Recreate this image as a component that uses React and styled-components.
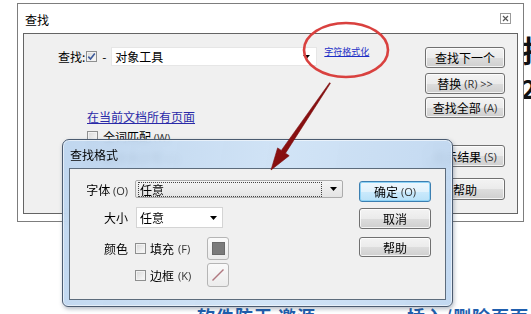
import React from 'react';
import styled, { createGlobalStyle } from 'styled-components';

const Global = createGlobalStyle`
  html, body { margin: 0; padding: 0; background: #fff; }
  body {
    width: 531px; height: 314px; overflow: hidden;
    font-family: "Noto Sans CJK SC", "Noto Sans", sans-serif;
    font-size: 12px; color: #000;
  }
`;

const Stage = styled.div`
  position: relative;
  width: 531px; height: 314px; overflow: hidden;
  box-sizing: border-box;
  padding: 3px 0 0 17px;
`;

const BgText = styled.div`
  position: absolute; z-index: 0;
  font-weight: 700; white-space: nowrap; line-height: 1;
  font-size: ${p => p.$size}px;
  color: ${p => p.$color};
  letter-spacing: ${p => p.$ls || 0}px;
`;

const Window = styled.div`
  position: relative; z-index: 1;
  width: 507px; height: 219px; box-sizing: border-box;
  border: 1px solid #7d7d7d; background: #fff;
  display: flex; flex-direction: column;
`;

const TitleBar = styled.div`
  height: 29px; flex: none; box-sizing: border-box;
  display: flex; align-items: center; justify-content: space-between;
  padding: 2px 12px 0 7px;
  font-size: 12px;
`;

const CloseBox = styled.div`
  width: 11px; height: 11px; box-sizing: border-box;
  border: 1px solid #9a9a9a; background: #fff;
  display: flex; align-items: center; justify-content: center;
  margin-top: -2px;
`;

const Panel = styled.div`
  flex: 1; margin: 0 5px 7px 5px; box-sizing: border-box;
  border: 1px solid #646464; background: #f0f0f0;
  display: flex; padding: 13px 12px 0 34px;
`;

const LeftCol = styled.div`
  flex: 1; display: flex; flex-direction: column;
`;

const SearchRow = styled.div`
  display: flex; align-items: center; height: 19px;
`;

const Dash = styled.span`
  width: 14px; text-align: center;
`;

const Combo = styled.div`
  box-sizing: border-box; flex: none;
  width: ${p => p.$w}px; height: ${p => p.$h}px;
  display: flex; align-items: center; justify-content: space-between;
  padding: ${p => p.$pad || '0 6px 0 3px'};
  background: ${p => p.$bg || '#fff'};
  border: 1px solid ${p => p.$bc || '#e6e6e6'};
  border-radius: ${p => p.$r || 0}px;
`;

const Focus = styled.span`
  flex: 1; margin-right: 8px; height: 13px; line-height: 13px;
  border: 1px dotted #444; padding-left: 1px;
`;

const SmallLink = styled.span`
  align-self: flex-start; margin: 0 0 0 7px;
  font-size: 9px; line-height: 9px; color: #1d2fc6; text-decoration: underline;
`;

const PageLink = styled.span`
  margin: 44px 0 0 29px; align-self: flex-start;
  font-size: 12px; line-height: 13px; color: #2a2aa8; text-decoration: underline;
`;

const CheckRow = styled.div`
  display: flex; align-items: center; gap: 5px;
  margin: ${p => p.$mt}px 0 0 29px; height: 13px;
`;

const Check = styled.span`
  display: inline-flex; flex: none;
  width: 11px; height: 11px; box-sizing: border-box;
  border: 1px solid #8e8f8f;
  background: linear-gradient(135deg, #d8d8d8, #fbfbfb);
  box-shadow: inset 0 0 0 1px #f2f2f2;
  align-items: center; justify-content: center;
`;

const Paren = styled.span`
  font-family: "Segoe UI", "Open Sans", "Noto Sans", sans-serif;
  font-size: 11px; color: #333;
`;

const BtnCol = styled.div`
  width: ${p => p.$w}px; flex: none;
  display: flex; flex-direction: column;
  padding-top: ${p => p.$pt || 0}px;
`;

const Btn = styled.div`
  box-sizing: border-box; width: 100%;
  height: ${p => p.$h || 21}px; margin-top: ${p => p.$mt || 0}px;
  display: flex; align-items: center; justify-content: center;
  border: 1px solid ${p => (p.$primary ? '#3c7fb1' : '#707070')};
  border-radius: 3px;
  background: ${p => (p.$primary
    ? 'linear-gradient(#eef7fd 0%, #e1f2fc 50%, #cbeafc 51%, #b9e1f8 100%)'
    : 'linear-gradient(#f3f3f3 0%, #ebebeb 50%, #dddddd 51%, #cfcfcf 100%)')};
  box-shadow: ${p => (p.$primary
    ? 'inset 0 0 0 1px #8ed3f6'
    : 'inset 0 0 0 1px rgba(255,255,255,0.75)')};
  font-size: 12px; white-space: nowrap; gap: 3px;
`;

const FormatDialog = styled.div`
  position: absolute; left: 62px; top: 139px; z-index: 2;
  width: 391px; height: 168px; box-sizing: border-box;
  border: 1px solid #4b5b70; border-radius: 7px 7px 6px 6px;
  background: linear-gradient(100deg, rgba(186,211,238,0.9) 0%, rgba(206,226,246,0.92) 55%, rgba(190,214,240,0.93) 100%);
  backdrop-filter: blur(3px);
  box-shadow: inset 0 0 0 1px rgba(255,255,255,0.55), 1px 2px 4px rgba(40,60,90,0.35);
  display: flex; flex-direction: column;
`;

const DlgTitle = styled.div`
  height: 28px; flex: none; display: flex; align-items: center;
  padding: 0 0 0 7px; font-size: 12px; color: #000;
`;

const DlgBody = styled.div`
  flex: 1; margin: 0 6px 6px 6px; box-sizing: border-box;
  border: 1px solid #5d6c7c; background: #f0f0f0;
  display: flex; justify-content: space-between;
  padding: 11px 14px 0 0;
`;

const Form = styled.div`
  display: flex; flex-direction: column;
`;

const FormRow = styled.div`
  display: flex; align-items: center; gap: 7px;
  height: ${p => p.$h}px; margin-top: ${p => p.$mt || 0}px;
`;

const Label = styled.span`
  width: 58px; flex: none; text-align: right; white-space: nowrap;
`;

const Opt = styled.span`
  width: 65px; flex: none; display: flex; align-items: center; gap: 4px;
  white-space: nowrap;
`;

const Swatch = styled.div`
  width: 22px; height: ${p => p.$h}px; box-sizing: border-box;
  border: 1px solid #b5b5b5; border-radius: 3px;
  background: linear-gradient(#fafafa, #ececec);
  display: flex; align-items: center; justify-content: center;
`;

const Fill = styled.span`
  width: 13px; height: 13px; background: #7b7b7b; border: 1px solid #6a6a6a;
  box-sizing: border-box;
`;

const Overlay = styled.svg`
  position: absolute; left: 0; top: 0; z-index: 3;
  pointer-events: none;
`;

const DropArrow = () => (
  <svg width="7" height="4" viewBox="0 0 7 4"><polygon points="0,0 7,0 3.5,4" fill="#000" /></svg>
);

const Tick = () => (
  <svg width="9" height="9" viewBox="0 0 9 9">
    <path d="M1.3 4.6 L3.5 7 L7.8 1.5" fill="none" stroke="#3d5a9a" strokeWidth="1.6" />
  </svg>
);

export default function App() {
  return (
    <>
      <Global />
      <Stage>
        <BgText $size={30} $color="#111" style={{ left: 522, top: 34 }}>批</BgText>
        <BgText $size={26} $color="#111" style={{ left: 521, top: 75 }}>2</BgText>
        <BgText $size={18} $color="#1f5fae" $ls={1} style={{ left: 197, top: 307 }}>软件防王 邀源</BgText>
        <BgText $size={18} $color="#1f5fae" $ls={1} style={{ left: 407, top: 307 }}>插入/删除页面</BgText>

        <Window>
          <TitleBar>
            <span>查找</span>
            <CloseBox>
              <svg width="7" height="7" viewBox="0 0 7 7">
                <path d="M1 1 L6 6 M6 1 L1 6" stroke="#555" strokeWidth="1.2" />
              </svg>
            </CloseBox>
          </TitleBar>
          <Panel>
            <LeftCol>
              <SearchRow>
                <span>查找:</span>
                <Check style={{ marginLeft: 1 }}><Tick /></Check>
                <Dash>-</Dash>
                <Combo $w={206} $h={19}>
                  <span>对象工具</span>
                  <DropArrow />
                </Combo>
                <SmallLink>字符格式化</SmallLink>
              </SearchRow>
              <PageLink>在当前文档所有页面</PageLink>
              <CheckRow $mt={7}>
                <Check />
                <span>全词匹配 <Paren>(W)</Paren></span>
              </CheckRow>
              <CheckRow $mt={8}>
                <Check />
                <span>区分大小写 <Paren>(C)</Paren></span>
              </CheckRow>
            </LeftCol>
            <BtnCol $w={80}>
              <Btn>查找下一个</Btn>
              <Btn $mt={5}>替换<Paren>(R) &gt;&gt;</Paren></Btn>
              <Btn $mt={3}>查找全部 <Paren>(A)</Paren></Btn>
              <Btn $mt={27} $h={22}>显示结果 <Paren>(S)</Paren></Btn>
              <Btn $mt={11} $h={22}>帮助</Btn>
            </BtnCol>
          </Panel>
        </Window>

        <FormatDialog>
          <DlgTitle>查找格式</DlgTitle>
          <DlgBody>
            <Form>
              <FormRow $h={18}>
                <Label>字体 <Paren>(O)</Paren></Label>
                <Combo $w={208} $h={18} $bg="linear-gradient(#f4f4f4, #e4e4e4)" $bc="#acacac" $r={2} $pad="0 5px 0 2px">
                  <Focus>任意</Focus>
                  <DropArrow />
                </Combo>
              </FormRow>
              <FormRow $h={21} $mt={9}>
                <Label>大小</Label>
                <Combo $w={87} $h={21} $bc="#d4d4d4" $pad="0 5px 0 3px" style={{ marginLeft: 1 }}>
                  <span>任意</span>
                  <DropArrow />
                </Combo>
              </FormRow>
              <FormRow $h={23} $mt={9}>
                <Label>颜色</Label>
                <Opt><Check />填充 <Paren>(F)</Paren></Opt>
                <Swatch $h={23}><Fill /></Swatch>
              </FormRow>
              <FormRow $h={24} $mt={3}>
                <Label />
                <Opt><Check />边框 <Paren>(K)</Paren></Opt>
                <Swatch $h={24}>
                  <svg width="14" height="14" viewBox="0 0 14 14">
                    <path d="M1.5 12.5 L12.5 1.5" stroke="#b07880" strokeWidth="1.5" />
                  </svg>
                </Swatch>
              </FormRow>
            </Form>
            <BtnCol $w={72} $pt={1}>
              <Btn $primary>确定 <Paren>(O)</Paren></Btn>
              <Btn $mt={6}>取消</Btn>
              <Btn $mt={8} $h={20}>帮助</Btn>
            </BtnCol>
          </DlgBody>
        </FormatDialog>

        <Overlay width="531" height="314" viewBox="0 0 531 314">
          <defs>
            <linearGradient id="arrowGrad" x1="0" y1="0" x2="1" y2="1">
              <stop offset="0" stopColor="#a0181a" />
              <stop offset="1" stopColor="#6e0606" />
            </linearGradient>
          </defs>
          <ellipse cx="346" cy="50" rx="42" ry="27" fill="none" stroke="#d9413f" strokeWidth="2.6" />
          <polygon
            points="329.6,82.7 281.3,150.4 277.6,147.9 271,170 289.2,155.7 285.5,153.2 330.4,83.3"
            fill="url(#arrowGrad)"
            stroke="#7a0a0a" strokeWidth="0.6" strokeLinejoin="round"
          />
        </Overlay>
      </Stage>
    </>
  );
}
